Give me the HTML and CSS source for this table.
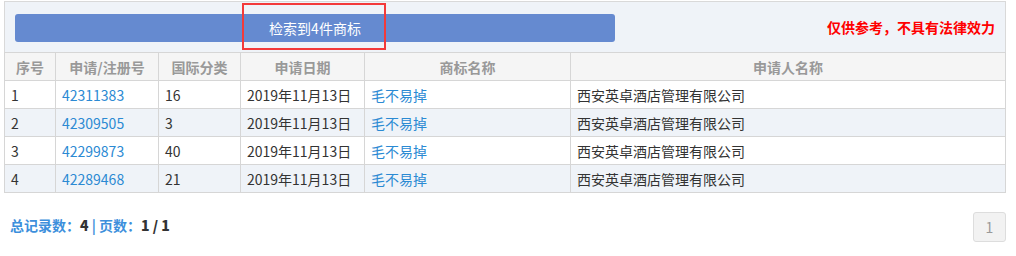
FILE: index.html
```html
<!DOCTYPE html>
<html lang="zh-CN">
<head>
    <meta charset="UTF-8">
    <title>商标检索结果</title>
    <link rel="stylesheet" href="styles.css">
</head>
<body>
    <div class="result-wrap">
        <div class="result-head">
            <div class="result-bar">检索到4件商标</div>
            <span class="notice">仅供参考，不具有法律效力</span>
            <div class="mark-box"></div>
        </div>
        <table class="result-table">
            <colgroup>
                <col style="width: 51px">
                <col style="width: 103px">
                <col style="width: 82px">
                <col style="width: 124px">
                <col style="width: 206px">
                <col>
            </colgroup>
            <thead>
                <tr>
                    <th>序号</th>
                    <th>申请/注册号</th>
                    <th>国际分类</th>
                    <th>申请日期</th>
                    <th>商标名称</th>
                    <th>申请人名称</th>
                </tr>
            </thead>
            <tbody>
                <tr>
                    <td>1</td>
                    <td><a href="#">42311383</a></td>
                    <td>16</td>
                    <td>2019年11月13日</td>
                    <td><a href="#">毛不易掉</a></td>
                    <td>西安英卓酒店管理有限公司</td>
                </tr>
                <tr>
                    <td>2</td>
                    <td><a href="#">42309505</a></td>
                    <td>3</td>
                    <td>2019年11月13日</td>
                    <td><a href="#">毛不易掉</a></td>
                    <td>西安英卓酒店管理有限公司</td>
                </tr>
                <tr>
                    <td>3</td>
                    <td><a href="#">42299873</a></td>
                    <td>40</td>
                    <td>2019年11月13日</td>
                    <td><a href="#">毛不易掉</a></td>
                    <td>西安英卓酒店管理有限公司</td>
                </tr>
                <tr>
                    <td>4</td>
                    <td><a href="#">42289468</a></td>
                    <td>21</td>
                    <td>2019年11月13日</td>
                    <td><a href="#">毛不易掉</a></td>
                    <td>西安英卓酒店管理有限公司</td>
                </tr>
            </tbody>
        </table>
        <div class="result-foot">
            <div class="summary">总记录数：<b>4</b> | 页数：<b>1 / 1</b></div>
            <a href="#" class="page-btn">1</a>
        </div>
    </div>
</body>
</html>
```

FILE: styles.css
```css
body {
    margin: 0;
    padding: 0;
    background-color: #fff;
    font-family: "Noto Sans CJK SC", "Microsoft YaHei", sans-serif;
    font-size: 14px;
    color: #333;
}

.result-wrap {
    padding: 1px 10px 0 4px;
}

.result-head {
    position: relative;
    display: flex;
    align-items: center;
    justify-content: space-between;
    height: 50px;
    padding: 0 10px 0 10px;
    background-color: #eff3f8;
    border: 1px solid #d9d9d9;
    border-bottom: none;
}

.result-bar {
    width: 600px;
    height: 28px;
    line-height: 28px;
    margin-top: 1px;
    text-align: center;
    color: #fff;
    font-size: 14px;
    background-color: #658ad0;
    border-radius: 3px;
}

.notice {
    color: #f00;
    font-size: 14px;
    font-weight: bold;
}

/* highlight frame over the result count */
.mark-box {
    position: absolute;
    left: 237px;
    top: 1px;
    width: 140px;
    height: 43px;
    border: 2px solid #f33a3a;
}

.result-table {
    width: 100%;
    table-layout: fixed;
    border-collapse: collapse;
}

.result-table th,
.result-table td {
    height: 27px;
    padding: 0 6px;
    border: 1px solid #d6d6d6;
    white-space: nowrap;
}

.result-table th {
    color: #999;
    font-weight: bold;
    background-color: #f5f5f5;
    text-align: center;
}

.result-table td {
    text-align: left;
}

.result-table tbody tr:nth-child(even) {
    background-color: #eff3f8;
}

.result-table a {
    color: #2b8ad3;
    text-decoration: none;
}

.result-foot {
    display: flex;
    justify-content: space-between;
    align-items: center;
    margin-top: 19px;
    padding-left: 6px;
}

.summary {
    margin-bottom: 5px;
    color: #3d8fdc;
    font-weight: bold;
}

.summary b {
    color: #333;
}

.page-btn {
    width: 31px;
    height: 28px;
    line-height: 28px;
    text-align: center;
    color: #999;
    font-size: 14px;
    text-decoration: none;
    background-color: #f2f2f2;
    border: 1px solid #ddd;
    border-radius: 3px;
}
```
